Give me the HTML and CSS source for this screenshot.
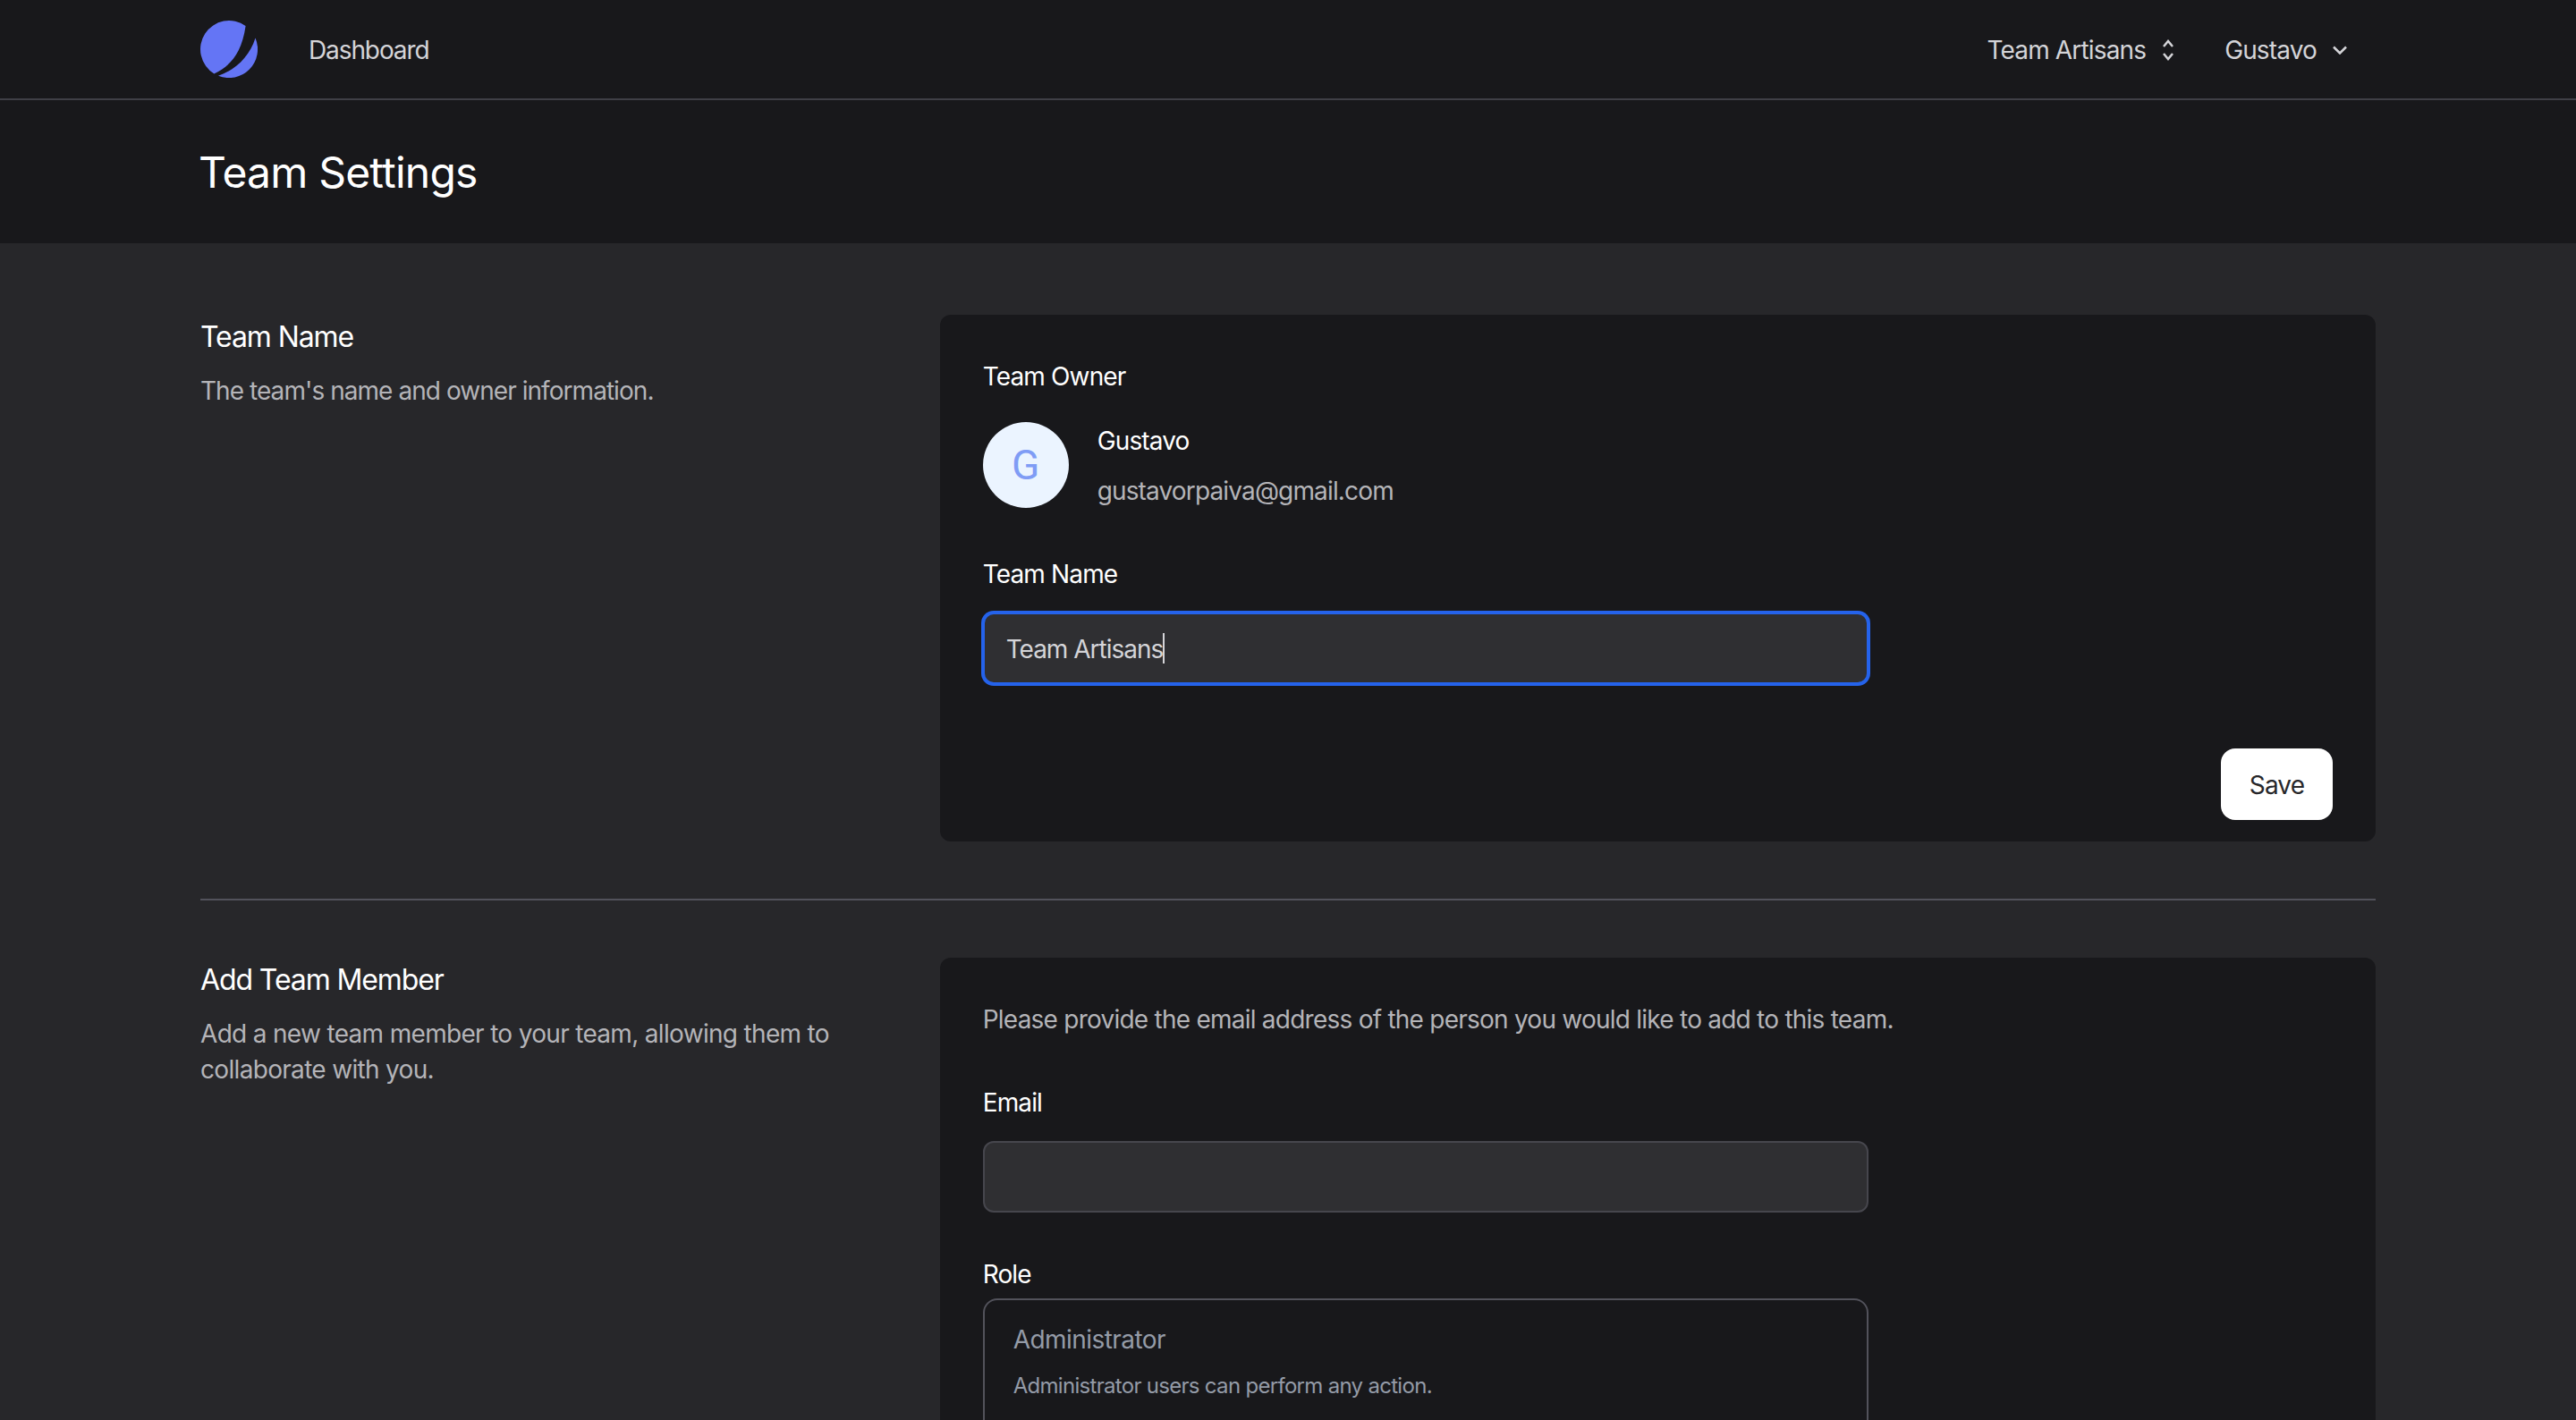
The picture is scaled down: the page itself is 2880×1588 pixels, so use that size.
FILE: index.html
```html
<!DOCTYPE html>
<html lang="en">
<head>
    <meta charset="UTF-8">
    <title>Team Settings</title>
    <link rel="stylesheet" href="styles.css">
</head>
<body>
    <nav class="nav">
        <div class="nav-left">
            <svg class="logo" viewBox="0 0 64 64">
                <path d="M50.600 6A32 32 0 1 0 15.400 59.400C31 52 46 39 50.600 6Z" fill="#6475f5"/>
                <path d="M61.500 19.500A32 32 0 0 1 20 61.700C40 55 55 40 61.500 19.500Z" fill="#6475f5"/>
            </svg>
            <a class="nav-link">Dashboard</a>
        </div>
        <div class="nav-right">
            <button class="nav-menu">
                Team Artisans
                <svg class="updown" viewBox="0 0 14 24"><path d="M2 8l5-6 5 6M2 16l5 6 5-6"/></svg>
            </button>
            <button class="nav-menu">
                Gustavo
                <svg class="down" viewBox="0 0 16 10"><path d="M1 1.500l7 7 7-7"/></svg>
            </button>
        </div>
    </nav>

    <header class="page-header">
        <h1>Team Settings</h1>
    </header>

    <main class="content">
        <section class="form-section">
            <div class="section-info">
                <h2>Team Name</h2>
                <p class="info-short">The team's name and owner information.</p>
            </div>
            <div class="card">
                <div class="card-body">
                    <div class="label">Team Owner</div>
                    <div class="owner">
                        <div class="avatar">G</div>
                        <div class="owner-text">
                            <div class="owner-name">Gustavo</div>
                            <div class="owner-email">gustavorpaiva@gmail.com</div>
                        </div>
                    </div>
                    <div class="label team-name-label">Team Name</div>
                    <div class="input focused">Team Artisans<span class="caret"></span></div>
                </div>
                <div class="card-footer">
                    <button class="save">Save</button>
                </div>
            </div>
        </section>

        <div class="divider"></div>

        <section class="form-section">
            <div class="section-info">
                <h2>Add Team Member</h2>
                <p>Add a new team member to your team, allowing them to collaborate with you.</p>
            </div>
            <div class="card">
                <div class="card-body">
                    <p class="intro">Please provide the email address of the person you would like to add to this team.</p>
                    <div class="label email-label">Email</div>
                    <div class="input"></div>
                    <div class="label role-label">Role</div>
                    <div class="role-box">
                        <div class="role-name">Administrator</div>
                        <div class="role-desc">Administrator users can perform any action.</div>
                    </div>
                </div>
            </div>
        </section>
    </main>
</body>
</html>
```

FILE: styles.css
```css
* {
    box-sizing: border-box;
}
html, body {
    height: 100%;
    overflow: hidden;
}
body {
    margin: 0;
    background: #27272a;
    color: #fff;
    font-family: 'Inter', sans-serif;
    font-size: 28px;
    line-height: 40px;
    letter-spacing: -0.85px;
}
h1, h2, p {
    margin: 0;
    font-weight: 400;
}
.nav {
    height: 112px;
    padding: 2px 224px 0;
    display: flex;
    justify-content: space-between;
    align-items: center;
    background: #18181b;
    border-bottom: 2px solid #3f3f46;
}
.nav-left {
    display: flex;
    align-items: center;
    gap: 57px;
}
.logo {
    width: 64px;
    height: 64px;
    display: block;
    margin-top: -2px;
}
.nav-link {
    color: #d4d4d8;
    letter-spacing: -1.1px;
}
.nav-right {
    display: flex;
    align-items: center;
    gap: 56px;
    padding-right: 32px;
}
.nav-menu {
    display: flex;
    align-items: center;
    gap: 18px;
    padding: 0;
    border: none;
    background: none;
    color: #d4d4d8;
    font: inherit;
    letter-spacing: inherit;
}
.nav-menu svg {
    fill: none;
    stroke: #d4d4d8;
    stroke-width: 2.500;
    display: block;
}
.updown {
    width: 14px;
    height: 24px;
}
.down {
    width: 16px;
    height: 10px;
}
.page-header {
    background: #18181b;
    height: 160px;
    padding: 49px 224px 0;
}
.page-header h1 {
    margin-left: -2px;
    font-size: 48px;
    line-height: 64px;
    letter-spacing: -0.8px;
}
.content {
    padding: 80px 224px 0;
}
.form-section {
    display: grid;
    grid-template-columns: 1fr 2fr;
    gap: 24px;
}
.section-info {
    padding-top: 1px;
    padding-right: 24px;
}
.section-info h2 {
    font-size: 32px;
    line-height: 48px;
    letter-spacing: -1.1px;
}
.section-info p {
    margin-top: 16px;
    color: #b4b4b8;
    letter-spacing: -0.68px;
}
.section-info .info-short {
    letter-spacing: -0.95px;
}
.card {
    background: #18181b;
    border-radius: 12px;
}
.card-body {
    padding: 48px;
}
.card-footer {
    display: flex;
    justify-content: flex-end;
    padding: 24px 48px;
}
.label {
    height: 40px;
    padding-top: 1px;
}
.owner {
    display: flex;
    align-items: center;
    gap: 32px;
    margin-top: 24px;
}
.avatar {
    width: 96px;
    height: 96px;
    border-radius: 50%;
    background: #ebf4ff;
    color: #7f9cf5;
    font-family: 'Roboto', sans-serif;
    font-size: 46px;
    letter-spacing: 0;
    display: flex;
    align-items: center;
    justify-content: center;
}
.owner-name,
.owner-email {
    height: 56px;
    padding-top: 1px;
    line-height: 56px;
}
.owner-email {
    color: #b4b4b8;
}
.team-name-label {
    margin-top: 45px;
}
.input {
    width: 990px;
    height: 80px;
    margin-top: 24px;
    padding: 2px 24px 0;
    display: flex;
    align-items: center;
    background: #2f2f32;
    border: 2px solid #46464d;
    border-radius: 12px;
    color: #d4d4d8;
    letter-spacing: -1px;
}
.input.focused {
    border-color: #2563eb;
    box-shadow: 0 0 0 2px #2563eb;
}
.caret {
    width: 2px;
    height: 34px;
    margin-top: -2px;
    background: #d4d4d8;
}
.save {
    width: 125px;
    height: 80px;
    padding: 2px 0 0;
    background: #fff;
    border: none;
    border-radius: 16px;
    color: #27272a;
    font: inherit;
    letter-spacing: inherit;
}
.divider {
    height: 2px;
    margin: 64px 0;
    background: #52525b;
}
.intro {
    height: 40px;
    padding-top: 1px;
    color: #b4b4b8;
    letter-spacing: -0.76px;
}
.email-label {
    margin-top: 53px;
}
.role-label {
    margin-top: 48px;
}
.role-box {
    width: 990px;
    height: 400px;
    margin-top: 8px;
    padding: 24px 32px;
    border: 2px solid #52525b;
    border-radius: 16px;
}
.role-name {
    color: #949ba7;
    letter-spacing: -0.55px;
}
.role-desc {
    margin-top: 12px;
    font-size: 24px;
    color: #949ba7;
    letter-spacing: -0.7px;
}
```
